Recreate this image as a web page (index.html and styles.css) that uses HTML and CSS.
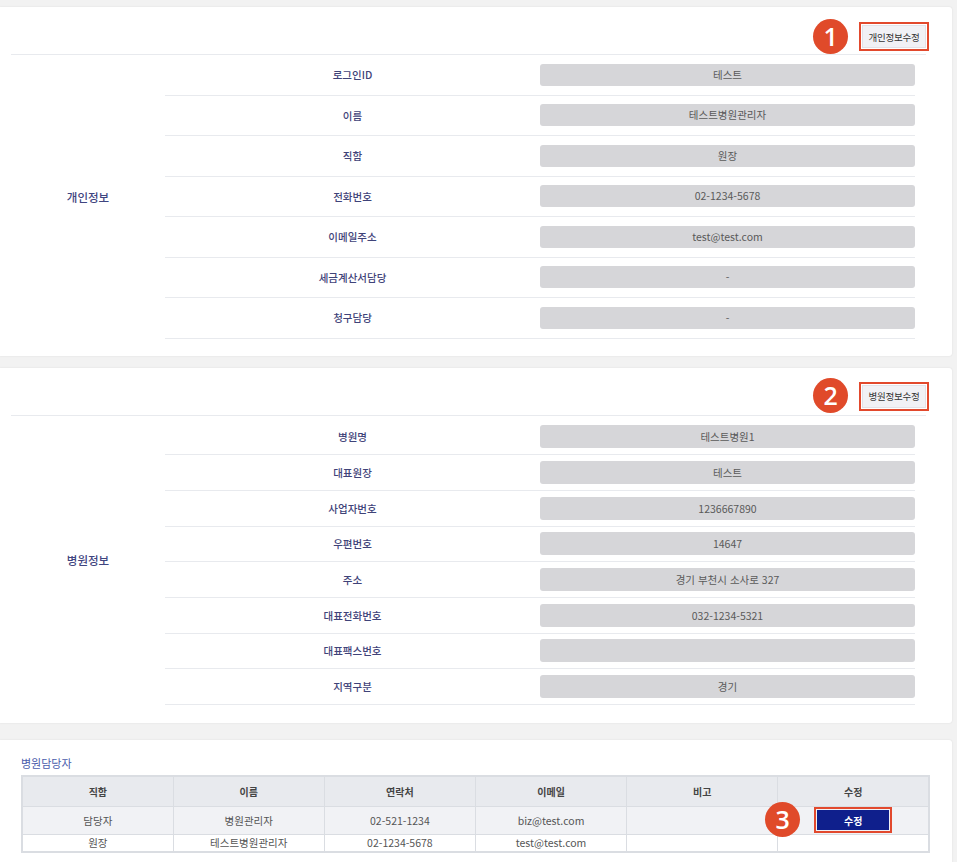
FILE: index.html
```html
<!DOCTYPE html>
<html lang="ko">
<head>
<meta charset="utf-8">
<title>정보관리</title>
<link rel="stylesheet" href="styles.css">
</head>
<body>
<div class="page">
  <section class="card card-personal">
    <div class="card-head">
      <span class="edit-btn">개인정보수정<span class="mark"></span><span class="badge">1</span></span>
    </div>
    <div class="info">
      <div class="info-cat">개인정보</div>
      <div class="info-rows">
        <div class="row"><div class="label">로그인ID</div><div class="value"><span class="field">테스트</span></div></div>
        <div class="row"><div class="label">이름</div><div class="value"><span class="field">테스트병원관리자</span></div></div>
        <div class="row"><div class="label">직함</div><div class="value"><span class="field">원장</span></div></div>
        <div class="row"><div class="label">전화번호</div><div class="value"><span class="field">02-1234-5678</span></div></div>
        <div class="row"><div class="label">이메일주소</div><div class="value"><span class="field">test@test.com</span></div></div>
        <div class="row"><div class="label">세금계산서담당</div><div class="value"><span class="field">-</span></div></div>
        <div class="row"><div class="label">청구담당</div><div class="value"><span class="field">-</span></div></div>
      </div>
    </div>
  </section>

  <section class="card card-hospital">
    <div class="card-head">
      <span class="edit-btn">병원정보수정<span class="mark"></span><span class="badge">2</span></span>
    </div>
    <div class="info">
      <div class="info-cat">병원정보</div>
      <div class="info-rows">
        <div class="row"><div class="label">병원명</div><div class="value"><span class="field">테스트병원1</span></div></div>
        <div class="row"><div class="label">대표원장</div><div class="value"><span class="field">테스트</span></div></div>
        <div class="row"><div class="label">사업자번호</div><div class="value"><span class="field">1236667890</span></div></div>
        <div class="row"><div class="label">우편번호</div><div class="value"><span class="field">14647</span></div></div>
        <div class="row"><div class="label">주소</div><div class="value"><span class="field">경기 부천시 소사로 327</span></div></div>
        <div class="row"><div class="label">대표전화번호</div><div class="value"><span class="field">032-1234-5321</span></div></div>
        <div class="row"><div class="label">대표팩스번호</div><div class="value"><span class="field"></span></div></div>
        <div class="row"><div class="label">지역구분</div><div class="value"><span class="field">경기</span></div></div>
      </div>
    </div>
  </section>

  <section class="card card-staff">
    <h3 class="staff-title">병원담당자</h3>
    <table class="staff-table">
      <thead>
        <tr><th>직함</th><th>이름</th><th>연락처</th><th>이메일</th><th>비고</th><th>수정</th></tr>
      </thead>
      <tbody>
        <tr class="row-a">
          <td>담당자</td><td>병원관리자</td><td>02-521-1234</td><td>biz@test.com</td><td></td>
          <td><span class="save-btn">수정<span class="mark"></span><span class="badge">3</span></span></td>
        </tr>
        <tr class="row-b">
          <td>원장</td><td>테스트병원관리자</td><td>02-1234-5678</td><td>test@test.com</td><td></td><td></td>
        </tr>
      </tbody>
    </table>
  </section>
</div>
</body>
</html>
```

FILE: styles.css
```css
* { box-sizing: border-box; }
html, body { margin: 0; padding: 0; }
body {
  background: #f2f2f2;
  font-family: "Noto Sans CJK KR", "Noto Sans", sans-serif;
  color: #555;
  font-size: 11px;
}
.page {
  padding: 7px 5px 0 0;
  display: flex;
  flex-direction: column;
}
.card {
  background: #fff;
  box-shadow: 0 0 2px rgba(0,0,0,0.1);
  border-radius: 0 3px 3px 0;
}
.card-personal { padding: 0 26px 17px 11px; }
.card-hospital { padding: 0 26px 18px 11px; margin-top: 12px; }
.card-staff { margin-top: 17px; padding: 16px 22px 20px 21px; }

.card-head {
  display: flex;
  justify-content: flex-end;
  padding: 18px 0 6px;
  border-bottom: 1px solid #e8eaee;
}
.card-hospital .card-head { padding-top: 17px; padding-bottom: 7px; }

.edit-btn {
  position: relative;
  display: flex;
  align-items: center;
  justify-content: center;
  width: 64px;
  height: 23px;
  background: #f1f1f5;
  border: 1px solid #e2e2e8;
  color: #333;
  font-size: 9.5px;
  letter-spacing: -0.2px;
}
.mark {
  position: absolute;
  left: -4px; right: -4px; top: -4px; bottom: -4px;
  border: 2px solid #e2492d;
  pointer-events: none;
}
.badge {
  position: absolute;
  right: calc(100% + 15px);
  top: 50%;
  width: 35px;
  height: 35px;
  margin-top: -18px;
  border-radius: 50%;
  background: #e04a2a;
  color: #fff;
  font-family: "Open Sans", "Liberation Sans", sans-serif;
  font-weight: 600;
  font-size: 25px;
  line-height: 35px;
  text-align: center;
}

.info {
  display: grid;
  grid-template-columns: 154px 1fr;
}
.info-cat {
  display: flex;
  align-items: center;
  justify-content: center;
  color: #3f4580;
  font-size: 11.5px;
  font-weight: 500;
}
.info-rows {
  padding-right: 11px;
}
.card-hospital .info-rows { padding-top: 4px; }
.row {
  display: grid;
  grid-template-columns: 375px 375px;
  align-items: center;
  height: 40.5px;
  border-bottom: 1px solid #e8eaee;
}
.card-hospital .row { height: 35.7px; }
.label {
  text-align: center;
  color: #3f4379;
  font-weight: 500;
  font-size: 10.5px;
}
.value { display: flex; }
.field {
  flex: 1;
  height: 22px;
  line-height: 22px;
  background: #d6d6d9;
  border-radius: 3px;
  text-align: center;
  color: #5a5a5a;
  font-size: 10.5px;
}
.card-hospital .field { height: 23px; line-height: 23px; }

.staff-title {
  margin: 0 0 5px;
  font-size: 11px;
  font-weight: 400;
  line-height: 14px;
  color: #4a5cab;
}
.staff-table {
  width: 909px;
  border-collapse: collapse;
  table-layout: fixed;
  border: 2px solid #dadde2;
}
.staff-table th, .staff-table td {
  border: 1px solid #dadde2;
  text-align: center;
  padding: 0;
  font-size: 10.5px;
}
.staff-table th {
  height: 30px;
  background: #e8eaee;
  color: #444;
  font-weight: 700;
  font-size: 10px;
}
.row-a td { height: 28px; background: #f1f2f5; color: #555; }
.row-b td { height: 18px; line-height: 16px; background: #fff; color: #555; }
.save-btn {
  position: relative;
  display: inline-flex;
  align-items: center;
  justify-content: center;
  width: 72px;
  height: 20px;
  background: #0f1f8c;
  color: #fff;
  font-weight: 700;
  font-size: 10px;
  vertical-align: middle;
}
.save-btn .mark { left: -3px; right: -3px; top: -3px; bottom: -3px; }
.save-btn .badge { right: calc(100% + 17px); }
```
